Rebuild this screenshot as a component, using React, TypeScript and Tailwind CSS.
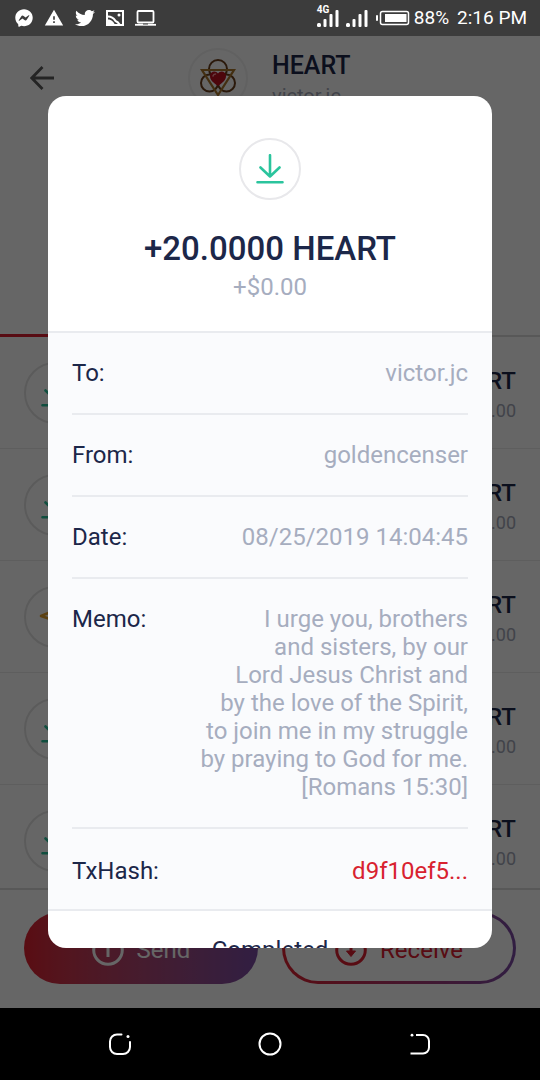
import React from 'react';
import { FaFacebookMessenger, FaTwitter } from 'react-icons/fa';
import { MdWarning } from 'react-icons/md';

interface IconProps {
  className?: string;
}

interface Detail {
  label: string;
  value: string;
  href?: string;
}

type Direction = 'in' | 'out';

const DETAILS: Detail[] = [
  { label: 'To:', value: 'victor.jc' },
  { label: 'From:', value: 'goldencenser' },
  { label: 'Date:', value: '08/25/2019 14:04:45' },
  {
    label: 'Memo:',
    value: [
      'I urge you, brothers',
      'and sisters, by our',
      'Lord Jesus Christ and',
      'by the love of the Spirit,',
      'to join me in my struggle',
      'by praying to God for me.',
      '[Romans 15:30]',
    ].join('\n'),
  },
  { label: 'TxHash:', value: 'd9f10ef5...', href: '#tx' },
];

const HISTORY: Direction[] = ['in', 'in', 'out', 'in', 'in'];

const DownloadIcon = ({ className }: IconProps) => (
  <svg viewBox="0 0 28 31" className={className} fill="none" stroke="currentColor" strokeWidth="2.6" strokeLinecap="round" strokeLinejoin="round">
    <path d="M14 1.2v21M4.500 13.500l9.500 9 9.500-9M1.500 28.200h25" />
  </svg>
);

const SendOutIcon = ({ className }: IconProps) => (
  <svg viewBox="0 0 32 28" className={className} fill="none" stroke="currentColor" strokeWidth="2.6" strokeLinejoin="round">
    <path d="M2 13L29 2l-8 24-7-9zM14 17L29 2" />
  </svg>
);

const PictureIcon = ({ className }: IconProps) => (
  <svg viewBox="0 0 18 16" className={className} fill="none" stroke="currentColor" strokeWidth="2">
    <path d="M1 1h16v14H1z" />
    <path d="M2 6.500c5 0 6.500 3 7.500 4.500 1.500.500 3 1.500 4 3.500" />
    <path d="M2 9.500c3.500 0 6 2.500 7 5.500H2z" fill="currentColor" stroke="none" />
    <circle cx="13" cy="5" r="1.500" fill="currentColor" stroke="none" />
  </svg>
);

const LaptopIcon = ({ className }: IconProps) => (
  <svg viewBox="0 0 21 16" className={className} fill="none" stroke="currentColor" strokeWidth="1.800">
    <rect x="2.500" y="1" width="16" height="11.500" rx="1" />
    <path d="M0 14.800h21" />
    <path d="M8 14h5" stroke="#3c3c3c" strokeWidth="1" />
  </svg>
);

const SignalIcon = ({ className }: IconProps) => (
  <svg viewBox="0 0 23 18" className={className} fill="currentColor">
    <rect x="0" y="14" width="4" height="4" rx="1.500" />
    <rect x="6.500" y="10" width="3" height="8" rx="1" />
    <rect x="12.500" y="5" width="3" height="13" rx="1" />
    <rect x="18.500" y="1" width="3" height="17" rx="1" />
  </svg>
);

const BatteryIcon = ({ className }: IconProps) => (
  <svg viewBox="0 0 34 16" className={className}>
    <rect x="0" y="5" width="2" height="6" rx="1" fill="currentColor" />
    <rect x="4.500" y="1.500" width="28" height="13" rx="2" fill="none" stroke="currentColor" strokeWidth="1.500" />
    <rect x="9" y="4" width="21.500" height="8" fill="currentColor" />
  </svg>
);

const BackArrow = ({ className }: IconProps) => (
  <svg viewBox="0 0 24 24" className={className} fill="none" stroke="currentColor" strokeWidth="2.800">
    <path d="M24 12H2M12.500 1L1.800 12l10.700 11" />
  </svg>
);

const HeartLogo = ({ className }: IconProps) => (
  <svg viewBox="0 0 38 38" className={className} fill="none">
    <g stroke="#6b3f1c" strokeWidth="2">
      <circle cx="19" cy="10" r="9" />
      <circle cx="10.500" cy="24" r="8.500" />
      <circle cx="27.500" cy="24" r="8.500" />
    </g>
    <path d="M3 11h32L19 36z" stroke="#a8752c" strokeWidth="2.200" />
    <path d="M19 27c-5-3.500-8-6-8-10 0-5 6-6 8-2.500 2-3.500 8-2.500 8 2.500 0 4-3 6.500-8 10z" fill="#c01020" />
    <path d="M14 17c.5-1.500 1.500-2 2.500-2" stroke="#ff9aa0" strokeWidth="1.500" strokeLinecap="round" />
  </svg>
);

const CircleArrow = ({ up, className }: IconProps & { up?: boolean }) => (
  <svg viewBox="0 0 32 32" className={className} fill="none" stroke="currentColor" strokeWidth="3">
    <circle cx="16" cy="16" r="14.300" />
    {up ? (
      <path d="M16 23V11M12 13l4-4 4 4" />
    ) : (
      <>
        <path d="M16 9v8" />
        <path d="M11.500 17h9L16 22.500z" fill="currentColor" strokeWidth="1" />
      </>
    )}
  </svg>
);

const StatusBar = () => (
  <div className="flex h-9 items-center justify-between bg-[#3c3c3c] pl-[15px] pr-[13px] text-white">
    <div className="flex items-center gap-[11px]">
      <FaFacebookMessenger className="size-[18px]" />
      <MdWarning className="size-5" />
      <FaTwitter className="size-5" />
      <PictureIcon className="h-4 w-[18px]" />
      <LaptopIcon className="h-4 w-[21px]" />
    </div>
    <div className="flex items-center text-[19px]">
      <div className="relative mr-[6px]">
        <SignalIcon className="h-[18px] w-[23px]" />
        <span className="absolute -top-1 left-0 bg-[#3c3c3c] text-[10px] leading-[10px] font-bold">4G</span>
      </div>
      <SignalIcon className="mr-[7px] h-[18px] w-[23px]" />
      <BatteryIcon className="mr-1 h-4 w-[34px]" />
      <span className="mr-2">88%</span>
      <span>2:16 PM</span>
    </div>
  </div>
);

const Wallet = () => (
  <div className="flex flex-1 flex-col bg-white text-[#1c2749]">
    <header className="flex h-[299px] items-start">
      <button aria-label="Back" className="mt-[30px] ml-[30px] text-[#5a5a5a]">
        <BackArrow className="size-6" />
      </button>
      <div className="mt-3 ml-[134px] flex size-[60px] items-center justify-center rounded-full border-2 border-[#f2f2f2]">
        <HeartLogo className="size-[38px]" />
      </div>
      <div className="mt-4 ml-6">
        <h1 className="text-[25px] leading-[28px] font-medium">HEART</h1>
        <p className="mt-1 text-xl leading-6 text-[#a3a8b8]">victor.jc</p>
      </div>
    </header>
    <div className="h-[2px] bg-[#dcdcdc]">
      <div className="-mt-px h-[3px] w-1/2 bg-[#dd2031]" />
    </div>
    <ul className="h-[551px] overflow-hidden">
      {HISTORY.map((direction, index) => (
        <li key={index} className="flex h-28 items-center justify-between border-b border-[#ececec] px-6">
          <div className="flex size-[62px] items-center justify-center rounded-full border-2 border-[#e4e4e4]">
            {direction === 'in' ? (
              <DownloadIcon className="h-[31px] w-7 text-[#2bc49d]" />
            ) : (
              <SendOutIcon className="h-7 w-8 text-[#e9a530]" />
            )}
          </div>
          <div className="pt-[6px] text-right">
            <div className="text-2xl leading-[30px] font-medium">HEART</div>
            <div className="text-lg leading-[30px] text-[#a3a8b8]">$0.00</div>
          </div>
        </li>
      ))}
    </ul>
    <footer className="grid grid-cols-2 gap-6 border-t-2 border-[#dcdcdc] px-6 pt-[22px] pb-6 text-2xl">
      <button className="flex h-[72px] items-center justify-center gap-[13px] rounded-full bg-linear-to-r from-[#e0202f] to-[#7b4ba5] pt-[3px] text-white">
        <CircleArrow up className="size-8" />
        Send
      </button>
      <button className="flex h-[72px] items-center justify-center gap-[13px] rounded-full border-3 border-transparent pt-[3px] text-[#dd2031] [background:linear-gradient(white,white)_padding-box,linear-gradient(to_right,#e0202f,#7b4ba5)_border-box]">
        <CircleArrow className="size-8" />
        Receive
      </button>
    </footer>
  </div>
);

const TransactionModal = () => (
  <div className="absolute inset-0 flex bg-black/60 px-12 py-[60px]">
    <div role="dialog" aria-label="Transaction details" className="flex-1 overflow-hidden rounded-[18px] bg-white text-2xl leading-[28px] text-[#1c2749]">
      <div className="flex flex-col items-center pt-[42px]">
        <div className="flex size-[62px] items-center justify-center rounded-full border-2 border-[#e8e8eb]">
          <DownloadIcon className="h-[31px] w-7 text-[#2bc49d]" />
        </div>
        <h2 className="mt-[29px] text-[33px] leading-[40px] font-medium">+20.0000 HEART</h2>
        <p className="mt-1 text-[#a6adbf]">+$0.00</p>
      </div>
      <dl className="mt-[30px] border-y-2 border-[#e9ebef] bg-[#fafbfd] px-6">
        {DETAILS.map(({ label, value, href }) => (
          <div key={label} className="flex justify-between border-b-2 border-[#e9ebef] pt-[26px] pb-[26px] last:border-b-0 last:pt-7 last:pb-6">
            <dt>{label}</dt>
            <dd className="text-right whitespace-pre-line text-[#a6adbf]">
              {href ? <a href={href} className="text-[#d8222f]">{value}</a> : value}
            </dd>
          </div>
        ))}
      </dl>
      <p className="pt-[25px] text-center">Completed</p>
    </div>
  </div>
);

const NavBar = () => (
  <nav className="flex h-[72px] items-center justify-center gap-[126px] bg-black text-white">
    <button aria-label="Recent apps">
      <svg viewBox="0 0 24 24" className="size-6" fill="none" stroke="currentColor" strokeWidth="2" strokeLinecap="round">
        <path d="M13.500 2.500H9a7 7 0 0 0-7 7V15a7 7 0 0 0 7 7h6a7 7 0 0 0 7-7v-5" />
        <circle cx="20" cy="4.500" r="1.500" fill="currentColor" stroke="none" />
      </svg>
    </button>
    <button aria-label="Home">
      <svg viewBox="0 0 24 24" className="size-6" fill="none" stroke="currentColor" strokeWidth="2">
        <circle cx="12" cy="12" r="10.500" />
      </svg>
    </button>
    <button aria-label="Back">
      <svg viewBox="0 0 24 24" className="size-6" fill="none" stroke="currentColor" strokeWidth="2">
        <path d="M8 3h7a6 6 0 0 1 6 6v6.500a6 6 0 0 1-6 6H2.500" />
        <circle cx="4" cy="3.200" r="1.400" fill="currentColor" stroke="none" />
      </svg>
    </button>
  </nav>
);

export default function App() {
  return (
    <div className="flex min-h-screen flex-col font-['Roboto',sans-serif]">
      <StatusBar />
      <main className="relative flex flex-1 flex-col">
        <Wallet />
        <TransactionModal />
      </main>
      <NavBar />
    </div>
  );
}
